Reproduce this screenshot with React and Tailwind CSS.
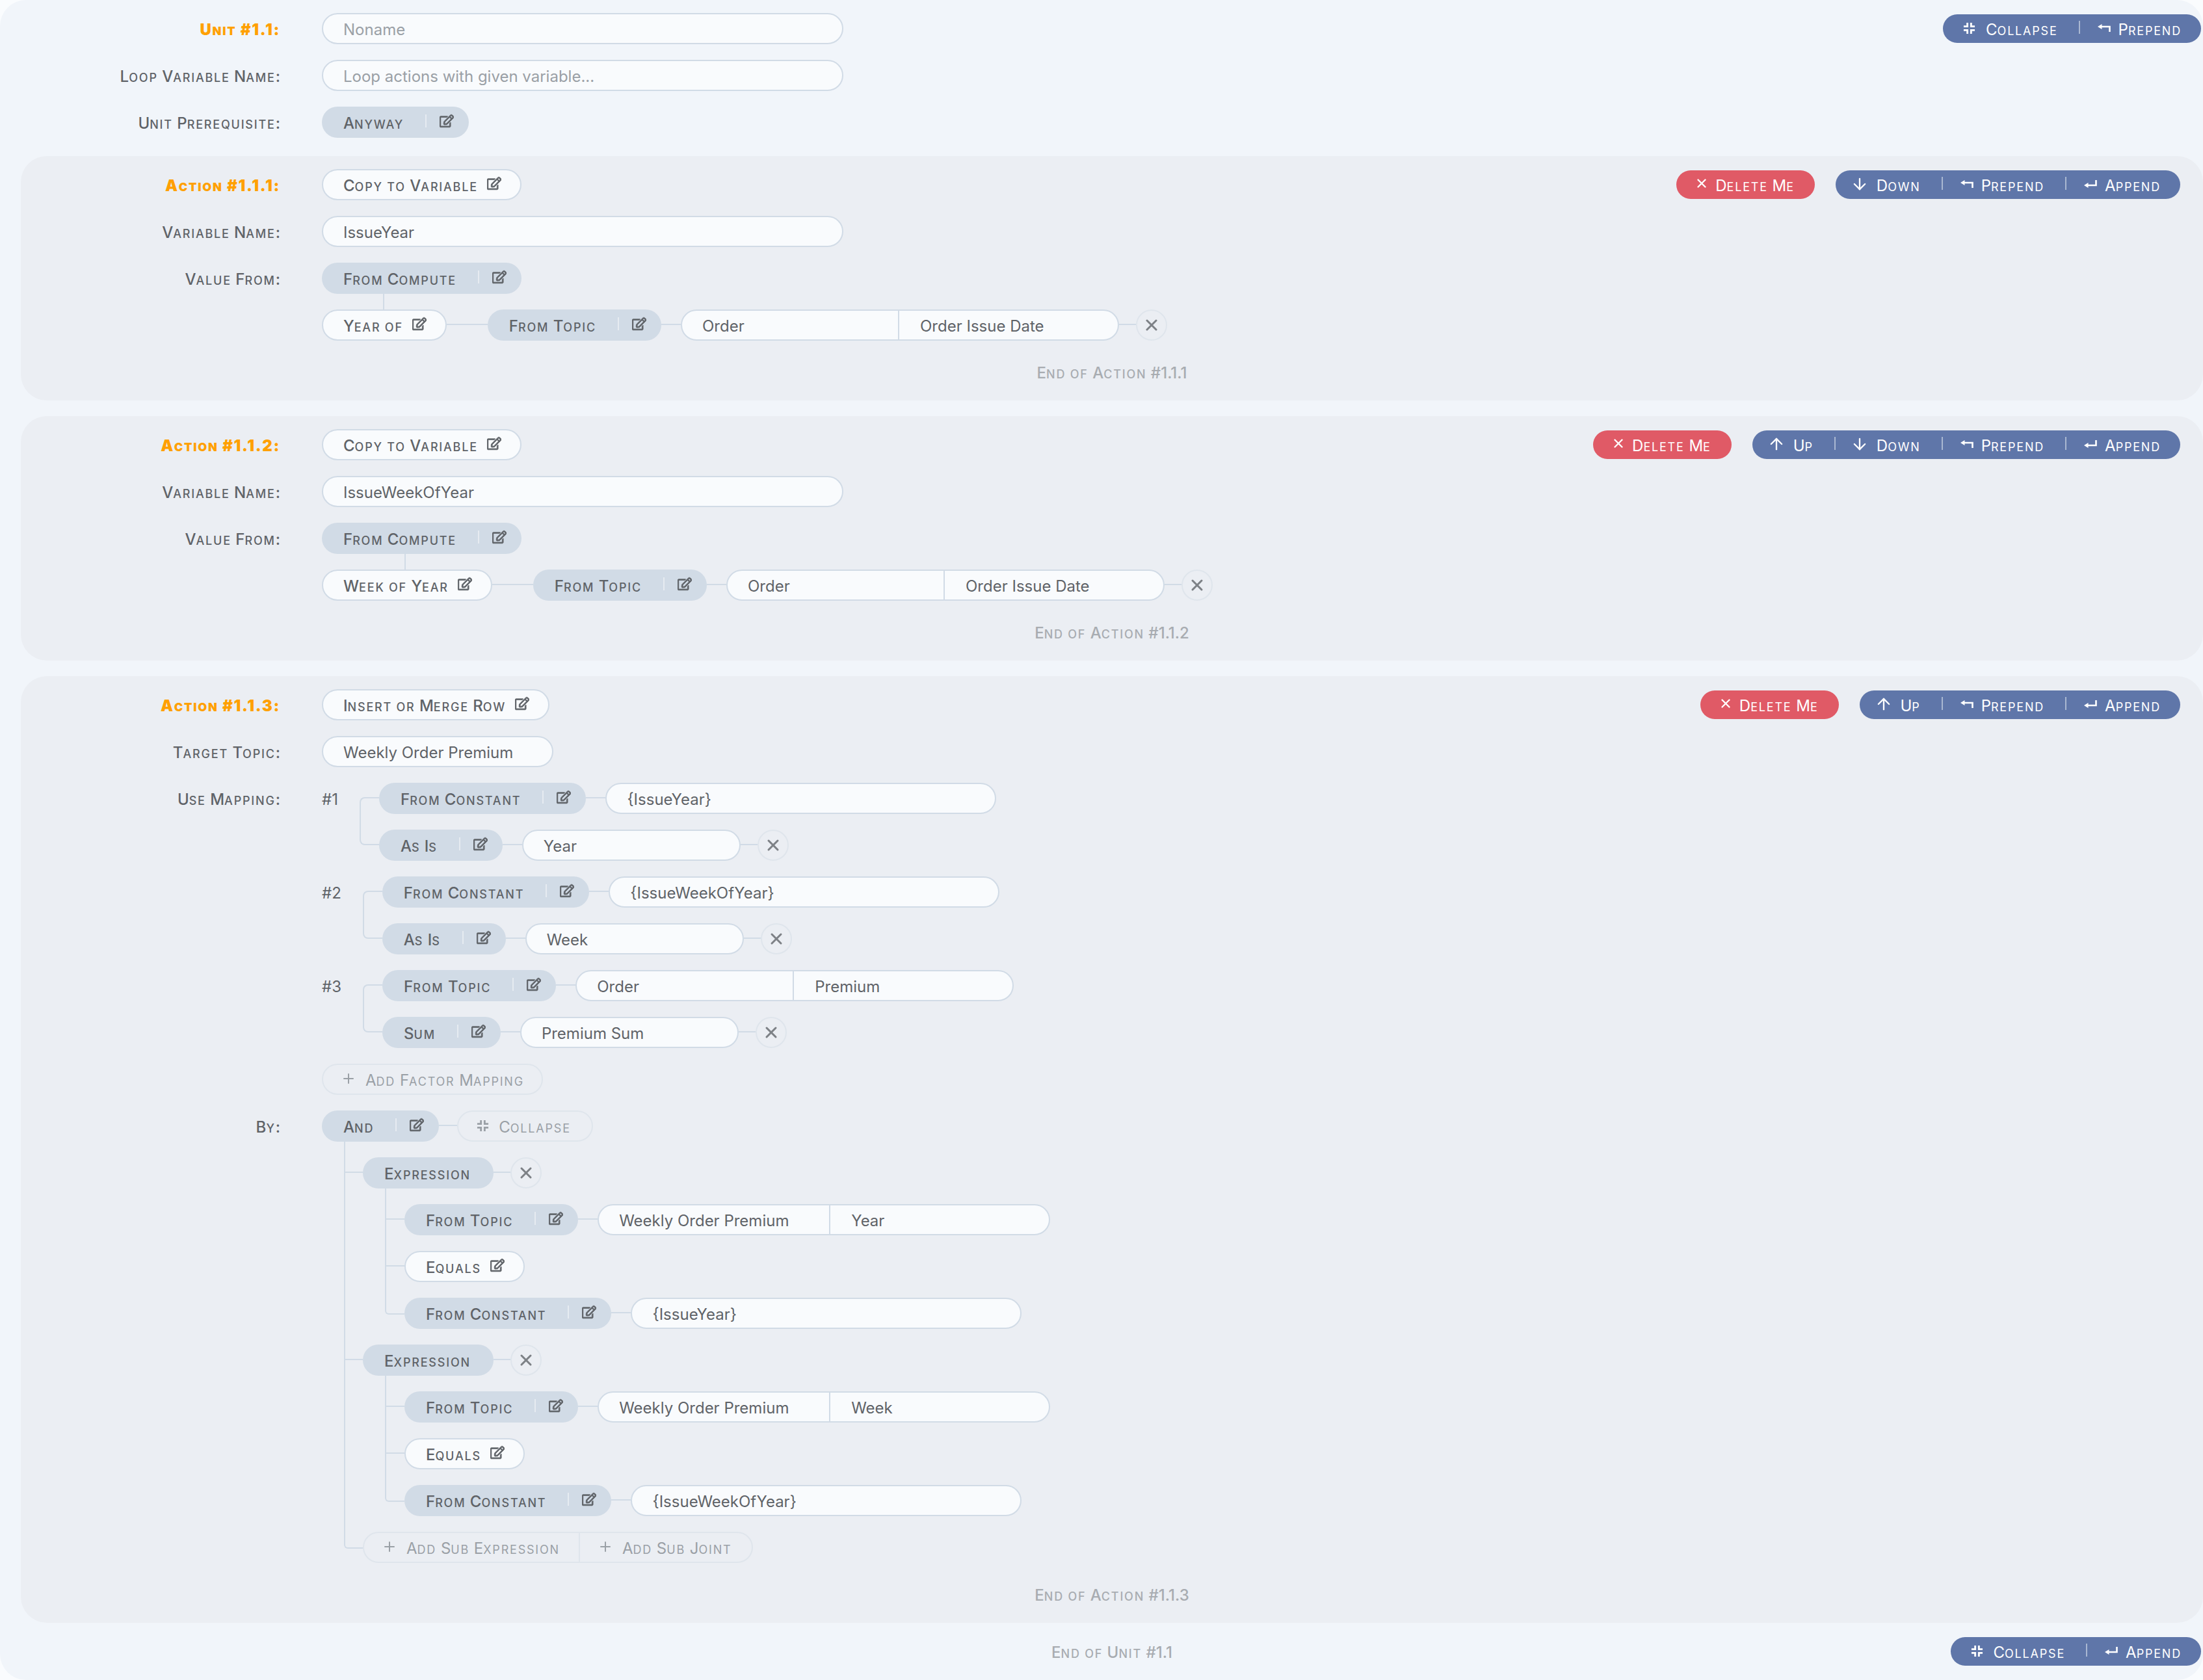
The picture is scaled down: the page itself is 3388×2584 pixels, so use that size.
import { ArrowDown, ArrowUp, Plus, X } from "lucide-react"
import { FaRegEdit } from "react-icons/fa"

// small caps drawn by hand, Inter's own smcp glyphs look nothing like the picture
function Caps({ children }) {
  const parts = String(children).split(/([a-z]+)/)
  return (
    <span className="inline-block translate-y-[2px] whitespace-pre">
      {parts.map((part, i) =>
        i % 2 === 1 ? (
          <span key={i} className="text-[18px] uppercase tracking-[1.8px]">
            {part}
          </span>
        ) : (
          part
        )
      )}
    </span>
  )
}

function Compress() {
  return (
    <svg viewBox="0 0 20 20" className="mx-1 size-[19px] -translate-y-[1px]" fill="none" stroke="currentColor" strokeWidth="3">
      <path d="M7 1v6H1M13 1v6h6M7 19v-6H1M13 19v-6h6" />
    </svg>
  )
}

function Prepend() {
  return (
    <svg viewBox="0 0 20 12" className="h-3 w-5 -translate-y-[1px]" fill="currentColor">
      <path d="M0 4 6.5 0v8z" />
      <path d="M5 4h13.5V12" fill="none" stroke="currentColor" strokeWidth="2.6" />
    </svg>
  )
}

function Append() {
  return (
    <svg viewBox="0 0 20 12" className="h-3 w-5 -translate-y-[1px]" fill="currentColor">
      <path d="M0 8 6.5 4v8z" />
      <path d="M5 8h13.5V0" fill="none" stroke="currentColor" strokeWidth="2.6" />
    </svg>
  )
}

function Down() {
  return <ArrowDown className="-ml-1 size-7 -translate-y-[1px]" strokeWidth={2} />
}

function Up() {
  return <ArrowUp className="-ml-1 size-7 -translate-y-[1px]" strokeWidth={2} />
}

function Edit({ className }) {
  return <FaRegEdit className={`size-[22px] -translate-y-[2px] ${className}`} stroke="currentColor" strokeWidth={20} />
}

function Label({ children, title, inset }) {
  const width = inset ? "w-[399px]" : "w-[431px]"
  return (
    <div
      className={`${width} mr-[64px] shrink-0 text-right ${
        title ? "font-black tracking-[1.6px] text-[#ffa000]" : "font-medium text-[#5f6368]"
      }`}
    >
      {children && <Caps>{children}</Caps>}
    </div>
  )
}

function Row({ label, title, inset, right, children }) {
  return (
    <div className="flex h-12 items-center">
      <Label title={title} inset={inset}>
        {label}
      </Label>
      <div className="flex items-center">{children}</div>
      {right}
    </div>
  )
}

function Chip({ label, edit = true }) {
  return (
    <div className={`flex h-12 shrink-0 items-center rounded-full bg-[#d1dbe6] pl-[33px] font-medium text-[#5f6368] ${edit ? "pr-[23px]" : "pr-[35px]"}`}>
      <Caps>{label}</Caps>
      {edit && (
        <>
          <span className="ml-[33px] h-5 w-[2px] -translate-y-[2px] bg-[#e6ebf1]" />
          <Edit className="ml-[20px]" />
        </>
      )}
    </div>
  )
}

function PickPill({ label }) {
  return (
    <div className="flex h-12 shrink-0 items-center rounded-full border-2 border-[#d1dbe6] bg-[#f9fbfd] pl-[31px] pr-[29px] font-medium text-[#5f6368]">
      <Caps>{label}</Caps>
      <Edit className="ml-[14px]" />
    </div>
  )
}

function TextPill({ text, placeholder, width = "w-[802px]" }) {
  return (
    <div className={`flex h-12 shrink-0 items-center rounded-full border-2 border-[#d1dbe6] bg-[#f9fbfd] pl-[31px] ${width} ${placeholder ? "text-[#9aa0a6]" : "text-[#5f6368]"}`}>
      <span className="translate-y-[2px]">{text}</span>
    </div>
  )
}

function FactorPill({ topic, factor, leftWidth = "w-[332px]", rightWidth = "w-[338px]" }) {
  return (
    <div className="flex h-12 shrink-0 items-center rounded-full border-2 border-[#d1dbe6] bg-[#f9fbfd] text-[#5f6368]">
      <div className={`flex h-full items-center pl-[31px] ${leftWidth}`}>
        <span className="translate-y-[2px]">{topic}</span>
      </div>
      <div className={`flex h-full items-center border-l-2 border-[#d1dbe6] pl-[32px] ${rightWidth}`}>
        <span className="translate-y-[2px]">{factor}</span>
      </div>
    </div>
  )
}

function Link({ width = "w-[30px]" }) {
  return <span className={`h-[2px] shrink-0 -translate-y-[1px] bg-[#d1dbe6] ${width}`} />
}

function Remove() {
  return (
    <>
      <Link width="w-[26px]" />
      <div className="flex size-12 shrink-0 items-center justify-center rounded-full border-2 border-[#dfe5ec] text-[#7d8186]">
        <X className="size-7" strokeWidth={2.6} />
      </div>
    </>
  )
}

function Buttons({ items, margin }) {
  return (
    <div className={`flex h-11 shrink-0 items-center rounded-full bg-[#5f76a9] text-white ${margin}`}>
      {items.map(([Icon, text], i) => (
        <div key={text} className="flex items-center">
          {i > 0 && <span className="h-5 w-[2px] -translate-y-[2px] bg-[#aab8d2]" />}
          <div className={`flex items-center gap-3 pl-[27px] ${i === items.length - 1 ? "pr-[30px]" : "pr-8"}`}>
            <Icon />
            <Caps>{text}</Caps>
          </div>
        </div>
      ))}
    </div>
  )
}

function ActionButtons({ items }) {
  return (
    <div className="ml-auto mr-[35px] flex items-center gap-8">
      <div className="flex h-11 items-center gap-[10px] rounded-full bg-[#e05a66] pl-7 pr-[31px] text-white">
        <X className="size-[22px] -translate-y-[2px]" strokeWidth={2.6} />
        <Caps>Delete Me</Caps>
      </div>
      <Buttons items={items} />
    </div>
  )
}

function Panel({ children }) {
  return (
    <div className="ml-8 flex flex-col gap-6 rounded-[40px] bg-[#ebeef3] pb-5 pt-5">{children}</div>
  )
}

function EndRow({ children }) {
  return (
    <div className="flex h-12 items-center justify-center font-medium text-[#a8acb1]">
      <Caps>{children}</Caps>
    </div>
  )
}

function Mapping({ index, first, second }) {
  return (
    <div className="flex">
      <div className="mr-[33px] flex h-12 items-center text-[#5f6368]">
        <span className="translate-y-[2px]">#{index}</span>
      </div>
      <div className="relative flex flex-col gap-6 pl-[30px]">
        <span className="absolute left-0 top-[22px] h-[74px] w-[30px] rounded-l-lg border-y-2 border-l-2 border-[#d1dbe6]" />
        <div className="flex items-center">{first}</div>
        <div className="flex items-center">{second}</div>
      </div>
    </div>
  )
}

function Branch({ children, left = "left-[34px]", width = "w-[29px]", pad = "pl-[63px]" }) {
  return (
    <div className={`relative flex items-center ${pad}`}>
      <span className={`absolute top-[22px] h-[2px] bg-[#d1dbe6] ${left} ${width}`} />
      {children}
    </div>
  )
}

function Expression({ factor, constant }) {
  return (
    <>
      <Branch>
        <Chip label="Expression" edit={false} />
        <Remove />
      </Branch>
      <div className="relative flex flex-col gap-6 pl-[127px]">
        <span className="absolute -top-6 bottom-[30px] left-[97px] w-[2px] bg-[#d1dbe6]" />
        <span className="absolute bottom-[22px] left-[97px] h-[10px] w-[30px] rounded-bl-md border-b-2 border-l-2 border-[#d1dbe6]" />
        <Branch left="-left-[30px]" width="w-[30px]" pad="pl-0">
          <Chip label="From Topic" />
          <Link />
          <FactorPill topic="Weekly Order Premium" factor={factor} leftWidth="w-[354px]" rightWidth="w-[338px]" />
        </Branch>
        <Branch left="-left-[30px]" width="w-[30px]" pad="pl-0">
          <PickPill label="Equals" />
        </Branch>
        <div className="flex items-center">
          <Chip label="From Constant" />
          <Link />
          <TextPill text={constant} width="w-[601px]" />
        </div>
      </div>
    </>
  )
}

export default function App() {
  return (
    <div className="w-[3388px] bg-[#fafcfe] font-['Inter',sans-serif] text-[24px] leading-none">
      <div className="flex flex-col gap-6 rounded-[40px] bg-[#f1f5fa] pb-[22px] pt-5">
        <Row
          label="Unit #1.1:"
          title
          right={
            <Buttons
              margin="ml-auto mr-[3px]"
              items={[
                [Compress, "Collapse"],
                [Prepend, "Prepend"],
              ]}
            />
          }
        >
          <TextPill text="Noname" placeholder />
        </Row>
        <Row label="Loop Variable Name:">
          <TextPill text="Loop actions with given variable..." placeholder />
        </Row>
        <Row label="Unit Prerequisite:">
          <Chip label="Anyway" />
        </Row>

        <div className="mt-1 flex flex-col gap-6">
          <Panel>
            <Row
              label="Action #1.1.1:"
              title
              inset
              right={
                <ActionButtons
                  items={[
                    [Down, "Down"],
                    [Prepend, "Prepend"],
                    [Append, "Append"],
                  ]}
                />
              }
            >
              <PickPill label="Copy to Variable" />
            </Row>
            <Row label="Variable Name:" inset>
              <TextPill text="IssueYear" />
            </Row>
            <Row label="Value From:" inset>
              <Chip label="From Compute" />
            </Row>
            <Row inset>
              <div className="relative flex items-center">
                <span className="absolute -top-6 left-[94px] h-6 w-[2px] bg-[#d1dbe6]" />
                <PickPill label="Year of" />
                <Link width="w-[63px]" />
                <Chip label="From Topic" />
                <Link />
                <FactorPill topic="Order" factor="Order Issue Date" />
                <Remove />
              </div>
            </Row>
            <EndRow>End of Action #1.1.1</EndRow>
          </Panel>

          <Panel>
            <Row
              label="Action #1.1.2:"
              title
              inset
              right={
                <ActionButtons
                  items={[
                    [Up, "Up"],
                    [Down, "Down"],
                    [Prepend, "Prepend"],
                    [Append, "Append"],
                  ]}
                />
              }
            >
              <PickPill label="Copy to Variable" />
            </Row>
            <Row label="Variable Name:" inset>
              <TextPill text="IssueWeekOfYear" />
            </Row>
            <Row label="Value From:" inset>
              <Chip label="From Compute" />
            </Row>
            <Row inset>
              <div className="relative flex items-center">
                <span className="absolute -top-6 left-[127px] h-6 w-[2px] bg-[#d1dbe6]" />
                <PickPill label="Week of Year" />
                <Link width="w-[63px]" />
                <Chip label="From Topic" />
                <Link />
                <FactorPill topic="Order" factor="Order Issue Date" />
                <Remove />
              </div>
            </Row>
            <EndRow>End of Action #1.1.2</EndRow>
          </Panel>

          <Panel>
            <Row
              label="Action #1.1.3:"
              title
              inset
              right={
                <ActionButtons
                  items={[
                    [Up, "Up"],
                    [Prepend, "Prepend"],
                    [Append, "Append"],
                  ]}
                />
              }
            >
              <PickPill label="Insert or Merge Row" />
            </Row>
            <Row label="Target Topic:" inset>
              <TextPill text="Weekly Order Premium" width="w-[356px]" />
            </Row>

            <div className="flex">
              <div className="mr-[64px] flex h-12 w-[399px] shrink-0 items-center justify-end font-medium text-[#5f6368]">
                <Caps>Use Mapping:</Caps>
              </div>
              <div className="flex flex-col gap-6">
                <Mapping
                  index={1}
                  first={
                    <>
                      <Chip label="From Constant" />
                      <Link />
                      <TextPill text="{IssueYear}" width="w-[601px]" />
                    </>
                  }
                  second={
                    <>
                      <Chip label="As Is" />
                      <Link />
                      <TextPill text="Year" width="w-[336px]" />
                      <Remove />
                    </>
                  }
                />
                <Mapping
                  index={2}
                  first={
                    <>
                      <Chip label="From Constant" />
                      <Link />
                      <TextPill text="{IssueWeekOfYear}" width="w-[601px]" />
                    </>
                  }
                  second={
                    <>
                      <Chip label="As Is" />
                      <Link />
                      <TextPill text="Week" width="w-[336px]" />
                      <Remove />
                    </>
                  }
                />
                <Mapping
                  index={3}
                  first={
                    <>
                      <Chip label="From Topic" />
                      <Link />
                      <FactorPill topic="Order" factor="Premium" />
                    </>
                  }
                  second={
                    <>
                      <Chip label="Sum" />
                      <Link />
                      <TextPill text="Premium Sum" width="w-[336px]" />
                      <Remove />
                    </>
                  }
                />
                <div className="flex h-12 w-[340px] items-center gap-[14px] rounded-full border-2 border-[#dfe5ec] pl-[27px] text-[#9aa0a6]">
                  <Plus className="size-6 -translate-y-[1px]" strokeWidth={2} />
                  <Caps>Add Factor Mapping</Caps>
                </div>
              </div>
            </div>

            <div className="flex">
              <div className="mr-[64px] flex h-12 w-[399px] shrink-0 items-center justify-end font-medium text-[#5f6368]">
                <Caps>By:</Caps>
              </div>
              <div className="relative flex flex-col gap-6">
                <span className="absolute bottom-[30px] left-[34px] top-12 w-[2px] bg-[#d1dbe6]" />
                <span className="absolute bottom-[22px] left-[34px] h-[10px] w-[29px] rounded-bl-md border-b-2 border-l-2 border-[#d1dbe6]" />
                <div className="flex items-center">
                  <Chip label="And" />
                  <Link width="w-[28px]" />
                  <div className="flex h-12 items-center gap-[11px] rounded-full border-2 border-[#dfe5ec] pl-6 pr-8 text-[#9aa0a6]">
                    <Compress />
                    <Caps>Collapse</Caps>
                  </div>
                </div>
                <Expression factor="Year" constant="{IssueYear}" />
                <Expression factor="Week" constant="{IssueWeekOfYear}" />
                <div className="flex pl-[63px]">
                  <div className="flex h-12 items-center rounded-full border-2 border-[#dfe5ec] text-[#9aa0a6]">
                    <div className="flex h-full items-center gap-[14px] pl-[27px] pr-[29px]">
                      <Plus className="size-6 -translate-y-[1px]" strokeWidth={2} />
                      <Caps>Add Sub Expression</Caps>
                    </div>
                    <div className="flex h-full items-center gap-[14px] border-l-2 border-[#dfe5ec] pl-[27px] pr-[31px]">
                      <Plus className="size-6 -translate-y-[1px]" strokeWidth={2} />
                      <Caps>Add Sub Joint</Caps>
                    </div>
                  </div>
                </div>
              </div>
            </div>

            <EndRow>End of Action #1.1.3</EndRow>
          </Panel>
        </div>

        <div className="relative -mt-[2px] flex h-11 items-center justify-center pl-8">
          <span className="font-medium text-[#a8acb1]">
            <Caps>End of Unit #1.1</Caps>
          </span>
          <div className="absolute right-0 top-0">
            <Buttons
              margin="mr-[3px]"
              items={[
                [Compress, "Collapse"],
                [Append, "Append"],
              ]}
            />
          </div>
        </div>
      </div>
    </div>
  )
}
